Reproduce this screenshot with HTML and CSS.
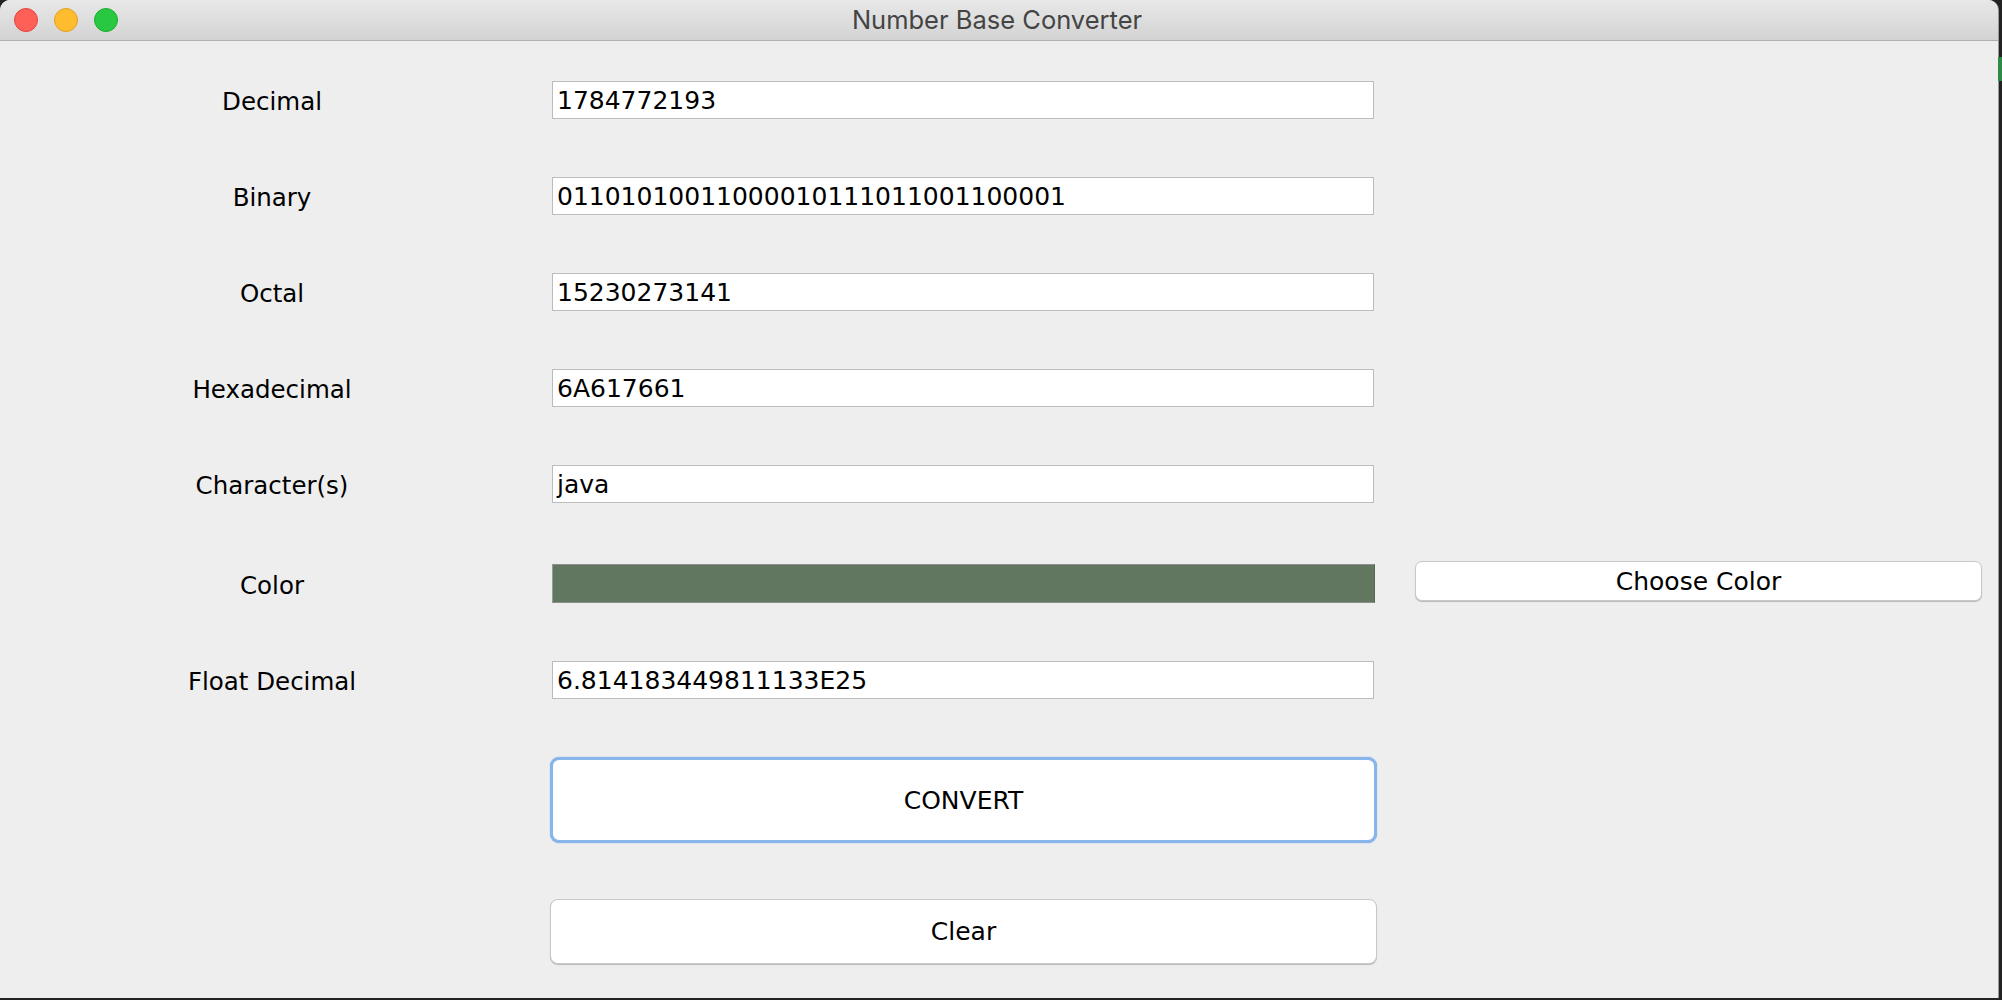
FILE: index.html
```html
<!DOCTYPE html>
<html>
<head>
<meta charset="utf-8">
<title>Number Base Converter</title>
<link rel="stylesheet" href="styles.css">
</head>
<body>
<div class="desktop">
  <div class="window">
    <div class="titlebar">
      <div class="lights">
        <span class="light red"></span>
        <span class="light yellow"></span>
        <span class="light green"></span>
      </div>
      <div class="title">Number Base Converter</div>
      <div class="spacer"></div>
    </div>
    <div class="form">
      <div class="label">Decimal</div>
      <div class="field">1784772193</div>
      <div class="empty"></div>

      <div class="label">Binary</div>
      <div class="field">01101010011000010111011001100001</div>
      <div class="empty"></div>

      <div class="label">Octal</div>
      <div class="field">15230273141</div>
      <div class="empty"></div>

      <div class="label">Hexadecimal</div>
      <div class="field">6A617661</div>
      <div class="empty"></div>

      <div class="label">Character(s)</div>
      <div class="field">java</div>
      <div class="empty"></div>

      <div class="label label-color">Color</div>
      <div class="swatch"></div>
      <div class="choose-cell"><button class="btn btn-choose">Choose Color</button></div>

      <div class="label">Float Decimal</div>
      <div class="field">6.814183449811133E25</div>
      <div class="empty"></div>

      <div class="empty"></div>
      <button class="btn btn-convert">CONVERT</button>
      <div class="empty"></div>

      <div class="empty"></div>
      <button class="btn btn-clear">Clear</button>
      <div class="empty"></div>
    </div>
  </div>
  <div class="peek"></div>
</div>
</body>
</html>
```

FILE: styles.css
```css
html, body {
  margin: 0;
  padding: 0;
}
body {
  background: #232323;
  width: 2002px;
  height: 1000px;
  overflow: hidden;
}
.desktop {
  position: relative;
  width: 2002px;
  height: 1000px;
}
.window {
  width: 1998px;
  height: 998px;
  background: #eeeeee;
  border-radius: 10px 10px 0 0;
  overflow: hidden;
  display: flex;
  flex-direction: column;
  box-shadow: 1px 0 0 #9a9a9a;
}
.titlebar {
  height: 40px;
  flex: 0 0 40px;
  background: linear-gradient(#e8e8e8, #d3d3d3);
  border-bottom: 1px solid #b1b1b1;
  display: grid;
  grid-template-columns: 1fr auto 1fr;
  align-items: center;
}
.lights {
  display: flex;
  gap: 16px;
  padding-left: 14px;
}
.light {
  width: 22px;
  height: 22px;
  border-radius: 50%;
  display: block;
}
.red { background: #fe5f57; border: 1px solid #e2463f; }
.yellow { background: #febc2e; border: 1px solid #dfa124; }
.green { background: #28c840; border: 1px solid #1dad2b; }
.title {
  font-family: Inter, "Liberation Sans", sans-serif;
  font-size: 25.5px;
  color: #444444;
  line-height: 40px;
  margin-right: 4px;
}
.form {
  display: grid;
  grid-template-columns: 552px 822px 608px;
  grid-template-rows: 38px 38px 38px 38px 38px 42px 38px 86px 66px;
  row-gap: 58px;
  padding-top: 40px;
}
.label {
  font-family: "DejaVu Sans", Verdana, sans-serif;
  font-size: 24.5px;
  color: #000;
  text-align: center;
  padding-right: 8px;
  padding-top: 3px;
  align-self: center;
  line-height: 38px;
}
.label-color {
  align-self: end;
  padding-top: 0;
  margin-bottom: -2px;
}
.field {
  box-sizing: border-box;
  height: 38px;
  background: #fff;
  border: 1px solid #bcbcbc;
  padding-left: 4px;
  font-family: "DejaVu Sans", Verdana, sans-serif;
  font-size: 25px;
  line-height: 37px;
  color: #000;
  white-space: nowrap;
  overflow: hidden;
}
.swatch {
  box-sizing: border-box;
  align-self: end;
  height: 39px;
  margin-right: -1px;
  background: #617760;
  border: 1px solid #8e8e8e;
  border-left-color: #9a9a9a;
  border-right-color: #556a54;
}
.choose-cell {
  padding-left: 41px;
  align-self: start;
}
.btn {
  box-sizing: border-box;
  font-family: "DejaVu Sans", Verdana, sans-serif;
  font-size: 25px;
  color: #000;
  background: #fff;
  border: 1px solid #c8c8c8;
  border-radius: 8px;
  box-shadow: 0 1px 1px rgba(0, 0, 0, 0.22);
  padding: 0;
  margin: 0;
  cursor: default;
}
.btn-choose {
  width: 567px;
  height: 40px;
  border-radius: 7px;
}
.btn-convert {
  margin: 0 -3px 0 -2px;
  height: 86px;
  border: 3px solid #88b5ea;
  border-radius: 9px;
  box-shadow: 0 0 1px #5e98e0;
}
.btn-clear {
  margin: -2px -3px 0 -2px;
  height: 65px;
}
.peek {
  position: absolute;
  right: 0;
  top: 57px;
  width: 4px;
  height: 24px;
  background: #2e8a46;
}
```
